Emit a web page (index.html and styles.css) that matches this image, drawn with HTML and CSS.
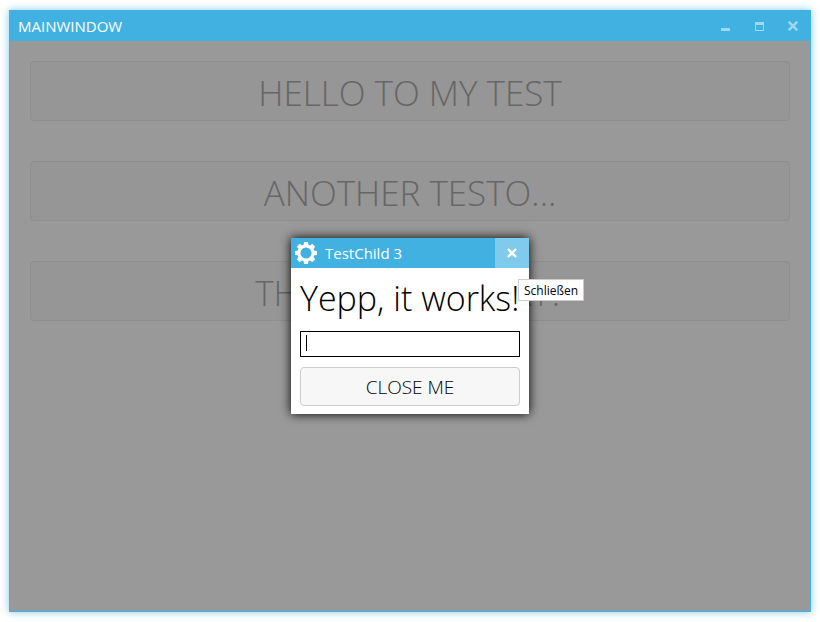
FILE: index.html
```html
<!DOCTYPE html>
<html lang="de">
<head>
<meta charset="utf-8">
<title>MainWindow</title>
<link rel="stylesheet" href="styles.css">
</head>
<body>
<div class="window">
  <header class="titlebar">
    <h1 class="window-title">MAINWINDOW</h1>
    <button class="window-button" aria-label="Minimieren"><svg width="9" height="10" viewBox="0 0 9 10"><path d="M0 7h9v3H0z"/></svg></button>
    <button class="window-button" aria-label="Maximieren"><svg width="9" height="10" viewBox="0 0 9 10"><path fill-rule="evenodd" d="M0 1h9v9H0zM1 4v5h7V4z"/></svg></button>
    <button class="window-button" aria-label="Fenster schließen"><svg width="10" height="10" viewBox="0 0 10 10"><path class="cross" d="M.7.7l8.6 8.6M9.3.7L.7 9.3"/></svg></button>
  </header>
  <main class="content">
    <button class="tile">HELLO TO MY TEST</button>
    <button class="tile">ANOTHER TESTO...</button>
    <button class="tile">THAT TEST IS NEXT?</button>
    <div class="overlay">
      <section class="dialog" role="dialog" aria-labelledby="dialog-title">
        <header class="dialog-bar">
          <svg class="gear" width="22" height="22" viewBox="-11 -11 22 22">
            <path id="tooth" d="M-2.6-7L-2-11H2L2.6-7z"/>
            <use href="#tooth" transform="rotate(45)"/><use href="#tooth" transform="rotate(90)"/><use href="#tooth" transform="rotate(135)"/><use href="#tooth" transform="rotate(180)"/><use href="#tooth" transform="rotate(225)"/><use href="#tooth" transform="rotate(270)"/><use href="#tooth" transform="rotate(315)"/>
            <circle class="ring" r="7"/>
          </svg>
          <h2 class="dialog-title" id="dialog-title">TestChild 3</h2>
          <button class="dialog-close" aria-label="Schließen"><svg width="10" height="10" viewBox="0 0 10 10"><path class="cross" d="M1 1l8 8M9 1L1 9"/></svg></button>
          <span class="tooltip" role="tooltip">Schließen</span>
        </header>
        <div class="dialog-body">
          <label class="message" for="entry">Yepp, it works!</label>
          <div class="field"><input class="entry" id="entry" type="text"><span class="caret"></span></div>
          <button class="close-me">CLOSE ME</button>
        </div>
      </section>
    </div>
  </main>
</div>
</body>
</html>
```
FILE: styles.css
```css
* { box-sizing: border-box; }
body { margin: 0; padding: 10px 9px; background: #fff; font-family: "Open Sans", sans-serif; }
button { margin: 0; padding: 0; font: inherit; }
svg { display: block; fill: currentColor; }
.cross { fill: none; stroke: currentColor; stroke-width: 2.4; }
.window { display: flex; flex-direction: column; height: calc(100vh - 20px); background: #999; border: 1px solid #41b1e1; box-shadow: 0 0 8px #41b1e1aa; }
.titlebar { display: flex; align-items: center; height: 30px; flex: none; background: #41b1e1; color: #fff; padding-left: 8px; }
.window-title { flex: 1; margin: 0; font-size: 15px; font-weight: 400; line-height: 20px; }
.window-button { display: flex; align-items: center; justify-content: center; width: 34px; height: 30px; border: 0; background: none; color: #a0d8f0; }
.content { position: relative; flex: 1; display: flex; flex-direction: column; gap: 40px; padding: 20px; }
.tile { height: 60px; padding-top: 4px; border: 1px solid #8e8e8e; border-radius: 4px; background: #969696; color: #666; font-size: 35px; font-weight: 300; line-height: 54px; white-space: nowrap; }
.overlay { position: absolute; inset: 0; display: flex; align-items: center; justify-content: center; }
.dialog { width: 238px; background: #fff; box-shadow: 0 0 10px #000; }
.dialog-bar { position: relative; display: flex; align-items: center; height: 30px; padding-left: 4px; gap: 8px; background: #41b1e1; color: #fff; }
.ring { fill: none; stroke: currentColor; stroke-width: 3; }
.dialog-title { flex: 1; margin: 0; font-size: 15px; font-weight: 400; line-height: 20px; }
.dialog-close { display: flex; align-items: center; justify-content: center; width: 34px; height: 30px; border: 0; background: #80caeb; color: #fff; }
.tooltip { position: absolute; top: 41px; left: 227px; padding: 2px 5px 0; border: 1px solid #ccc; background: #fff; color: #000; font-size: 12px; line-height: 18px; }
.dialog-body { display: flex; flex-direction: column; gap: 10px; padding: 8px 9px; }
.message { font-size: 34px; font-weight: 300; line-height: 45px; white-space: nowrap; }
.field { position: relative; display: flex; }
.entry { width: 100%; height: 26px; padding: 0 5px; border: 1px solid #000; border-radius: 0; background: #fff; font: inherit; font-size: 15px; }
.caret { position: absolute; left: 6px; top: 4px; width: 1px; height: 16px; background: #000; }
.close-me { height: 39px; border: 1px solid #ccc; border-radius: 4px; background: #f7f7f7; color: #000; font-size: 19px; font-weight: 300; }
```
